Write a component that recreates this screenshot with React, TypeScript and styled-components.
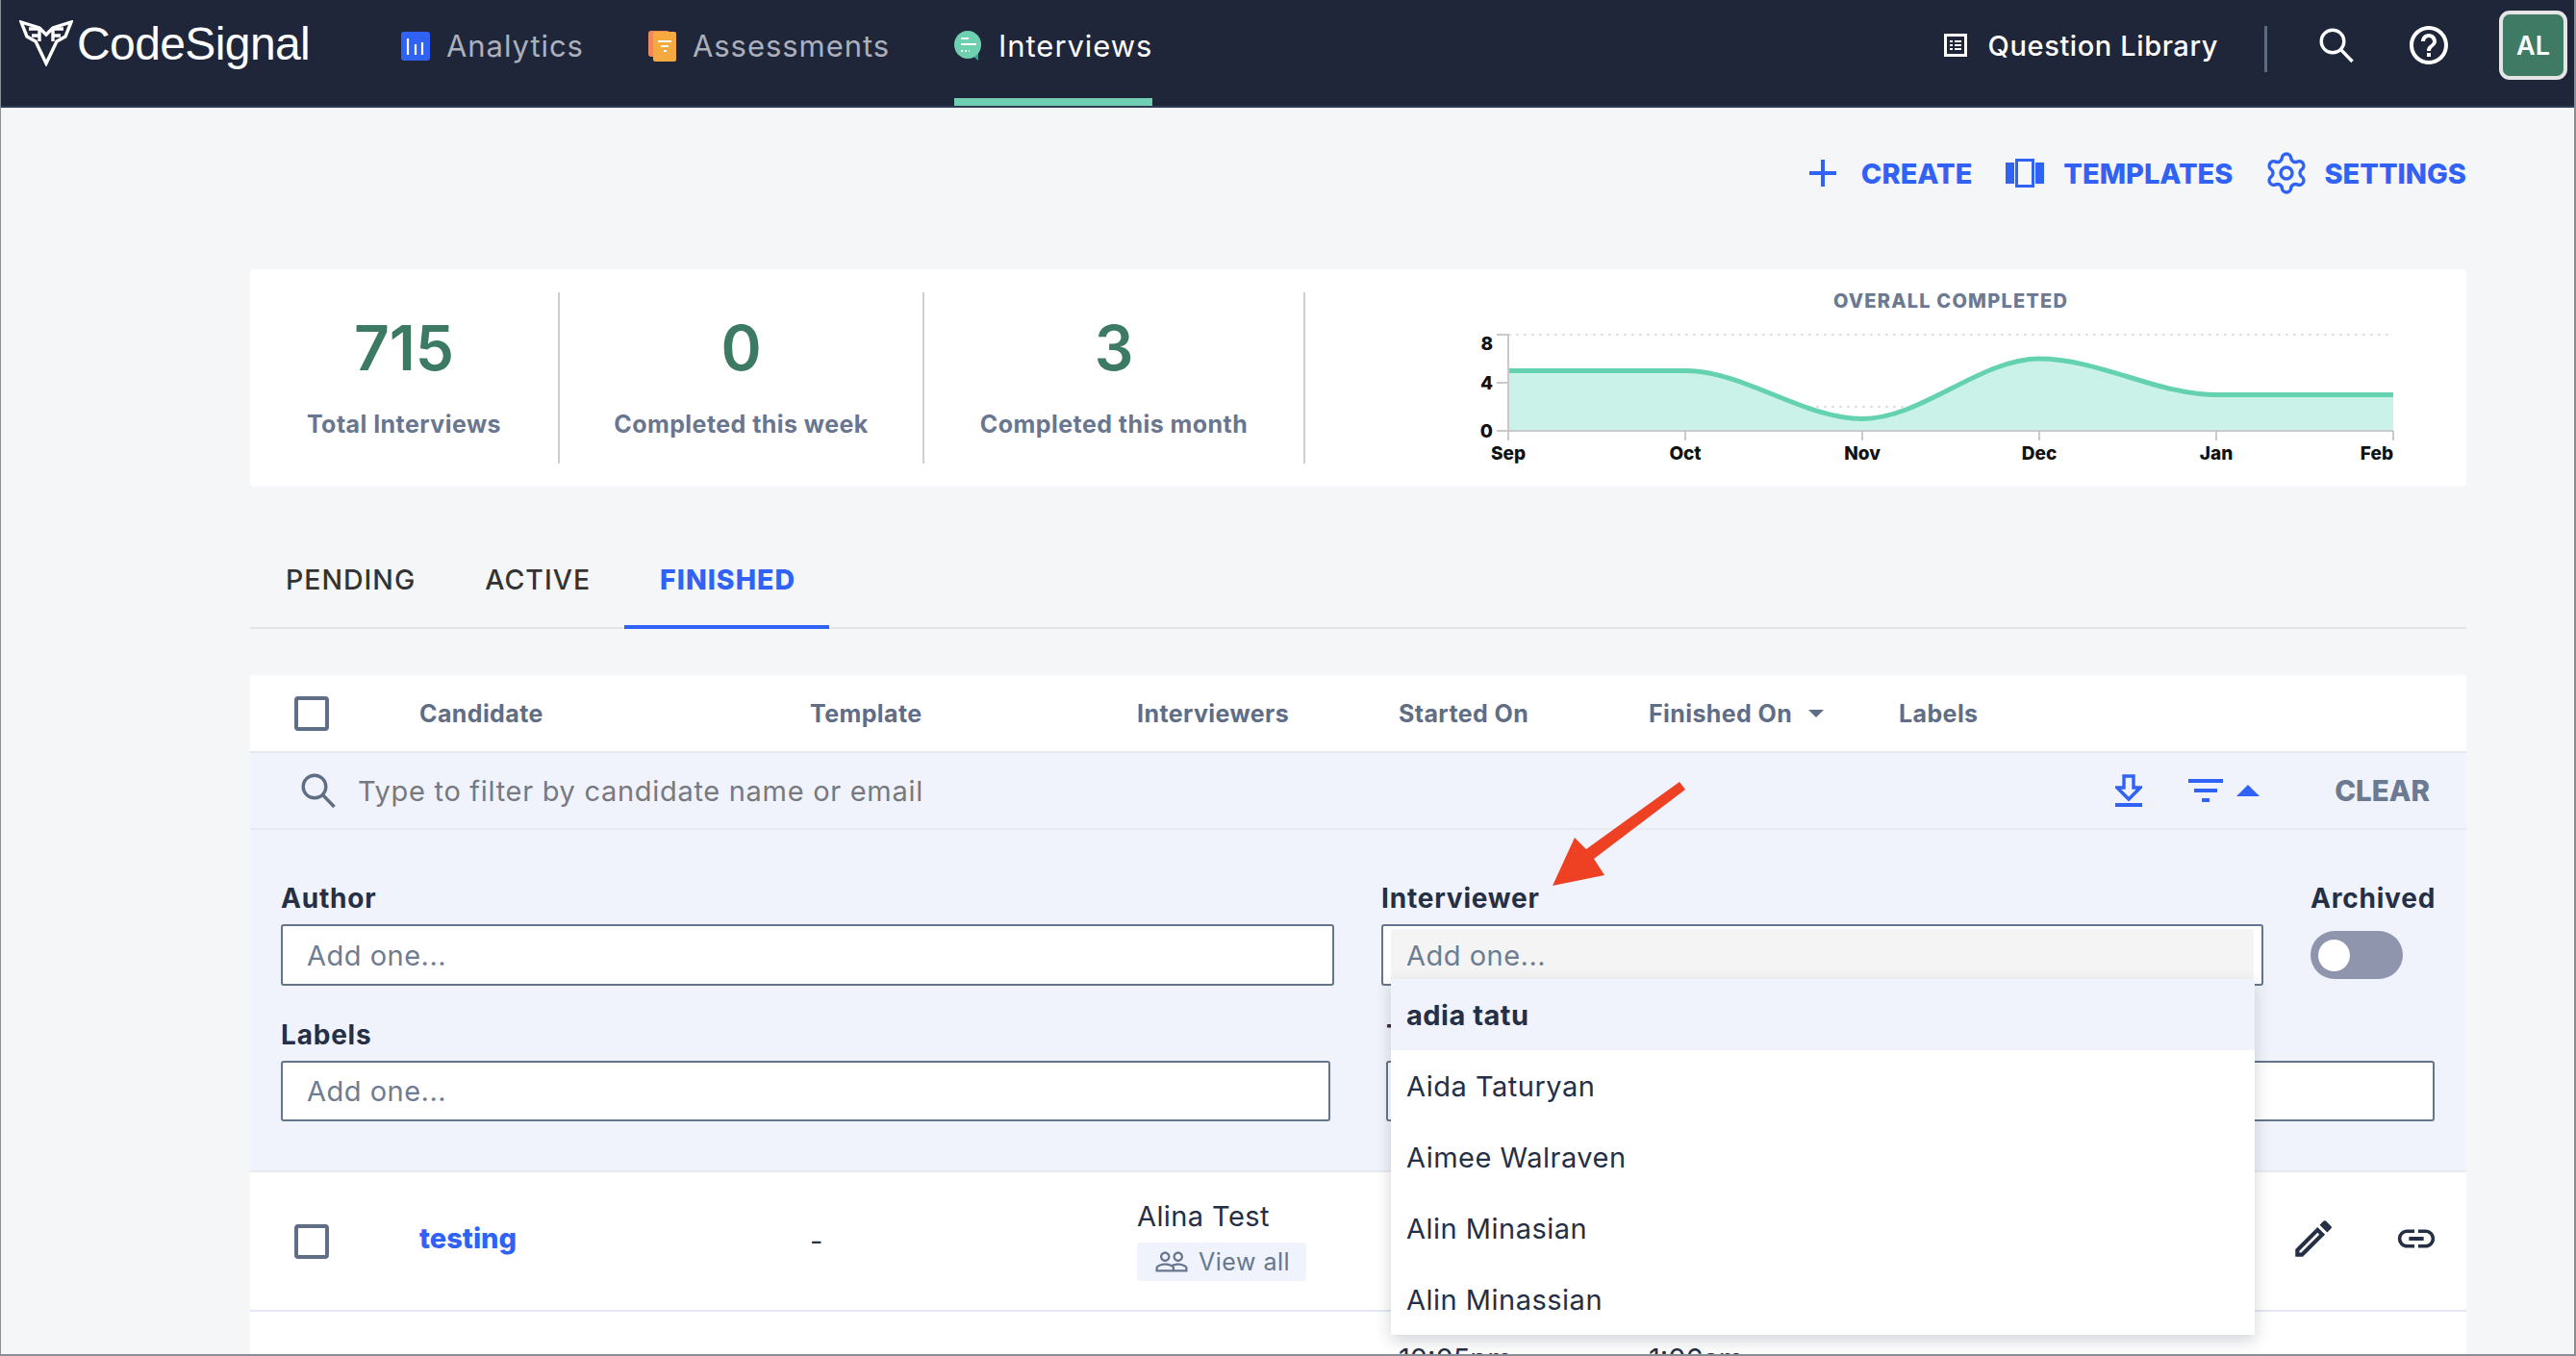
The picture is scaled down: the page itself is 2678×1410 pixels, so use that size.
import React from "react";
import styled, { createGlobalStyle } from "styled-components";
import { Plus, Settings } from "lucide-react";
import { MdHelpOutline, MdOutlineEdit, MdLink, MdPeopleOutline } from "react-icons/md";

const GlobalStyle = createGlobalStyle`
  html, body {
    margin: 0;
    padding: 0;
    background: #f5f6f8;
    font-family: Inter, "Noto Sans", sans-serif;
  }
  * { box-sizing: border-box; }
`;

const BLUE = "#2f62f5";
const NAVY = "#252f45";
const SLATE = "#68768f";

const Page = styled.div`
  position: relative;
  width: 2678px;
  height: 1410px;
  overflow: hidden;
  background: #f5f6f8;
  border-left: 1px solid #8a8d94;
  border-right: 2px solid #8a8d94;
  border-bottom: 2px solid #8a8d94;
`;

const Header = styled.header`
  display: flex;
  align-items: center;
  height: 112px;
  background: #1f263a;
  border-bottom: 2px solid #2c3a55;
`;

const Logo = styled.div`
  display: flex;
  align-items: center;
  gap: 4px;
  width: 416px;
  padding: 0 0 20px 19px;
  color: #fff;
  font-family: "Liberation Sans", Arial, sans-serif;
  font-size: 48px;
  letter-spacing: -0.6px;
`;

const NavItem = styled.div<{ $active?: boolean }>`
  position: relative;
  display: flex;
  align-items: center;
  gap: 17px;
  height: 110px;
  margin-right: 67px;
  padding-bottom: 15px;
  font-size: 31px;
  letter-spacing: 0.95px;
  color: ${(p) => (p.$active ? "#ffffff" : "#aab0bc")};

  &::after {
    content: "";
    display: ${(p) => (p.$active ? "block" : "none")};
    position: absolute;
    left: 0;
    right: 0;
    bottom: 0;
    height: 8px;
    background: #6fcfb0;
  }
`;

const HeaderRight = styled.div`
  display: flex;
  align-items: center;
  margin-left: auto;
  padding: 0 7px 16px 0;
  color: #fff;
`;

const LibraryLink = styled.div`
  display: flex;
  align-items: center;
  gap: 22px;
  font-size: 29px;
  font-weight: 500;
  letter-spacing: 0.6px;
`;

const HeaderDivider = styled.div`
  width: 3px;
  height: 48px;
  margin: 8px 54px 0 48px;
  background: #5d6b80;
`;

const HeaderIcons = styled.div`
  display: flex;
  align-items: center;
  gap: 54px;
`;

const Avatar = styled.div`
  display: flex;
  align-items: center;
  justify-content: center;
  width: 71px;
  height: 72px;
  margin-left: 49px;
  border: 4px solid #e5e5e5;
  border-radius: 11px;
  background: #3e7a64;
  font-size: 27px;
  font-weight: 600;
`;

const Main = styled.main`
  padding: 0 112px 0 259px;
`;

const ActionBar = styled.div`
  display: flex;
  justify-content: flex-end;
  align-items: center;
  gap: 32px;
  height: 168px;
  padding-bottom: 32px;
`;

const ActionLink = styled.div<{ $gap: number }>`
  display: flex;
  align-items: center;
  gap: ${(p) => p.$gap}px;
  color: ${BLUE};
  font-size: 29px;
  font-weight: 800;

  &:first-child {
    margin-right: 3px;
  }
`;

const StatCard = styled.section`
  display: flex;
  height: 226px;
  padding: 24px 0;
  background: #fff;
  border-radius: 4px;
`;

const StatCell = styled.div<{ $width: number }>`
  display: flex;
  flex-direction: column;
  align-items: center;
  flex: 0 0 ${(p) => p.$width}px;
  height: 178px;
  padding-top: 20px;
  border-right: 2px solid #cfcfd2;
`;

const StatNumber = styled.div`
  font-size: 64px;
  line-height: 76px;
  font-weight: 600;
  color: #3c7a64;
`;

const StatLabel = styled.div`
  margin-top: 26px;
  font-size: 25px;
  letter-spacing: 0.44px;
  line-height: 30px;
  font-weight: 700;
  color: ${SLATE};
`;

const ChartBox = styled.div`
  flex: 1;
  height: 178px;
  margin-top: -24px;
`;

const ChartSvg = styled.svg`
  display: block;
`;

const TabBar = styled.nav`
  display: flex;
  height: 148px;
  padding-top: 64px;
  border-bottom: 2px solid #e3e4e6;
`;

const Tab = styled.div<{ $active?: boolean }>`
  height: 84px;
  padding: 17px 35px 0 37px;
  font-size: 28.5px;
  letter-spacing: 1px;
  line-height: 32px;
  font-weight: ${(p) => (p.$active ? 800 : 500)};
  color: ${(p) => (p.$active ? BLUE : "#333333")};
  border-bottom: ${(p) => (p.$active ? `4px solid ${BLUE}` : "none")};
`;

const Table = styled.section`
  margin-top: 48px;
`;

const COLUMNS = "130px 406px 340px 272px 260px 260px 1fr";

const HeadRow = styled.div`
  display: grid;
  grid-template-columns: ${COLUMNS};
  align-items: center;
  height: 81px;
  padding-left: 46px;
  background: #fff;
  border-bottom: 2px solid #e6e9ee;
`;

const HeadCell = styled.div`
  display: flex;
  align-items: center;
  gap: 17px;
  font-size: 25px;
  letter-spacing: 0.4px;
  font-weight: 700;
  color: #5f6d85;
`;

const Checkbox = styled.div`
  width: 36px;
  height: 36px;
  border: 4px solid #5f6d85;
  border-radius: 4px;
  background: #fff;
`;

const FilterBar = styled.div`
  display: flex;
  align-items: center;
  height: 80px;
  padding: 0 38px 0 53px;
  background: #f0f3fb;
  border-bottom: 2px solid #e8eaf0;
`;

const FilterInput = styled.div`
  margin-left: 23px;
  font-size: 29px;
  color: #77797f;
  letter-spacing: 0.7px;
`;

const FilterTools = styled.div`
  display: flex;
  align-items: center;
  margin-left: auto;
`;

const ToolButton = styled.div<{ $left: number }>`
  display: flex;
  margin-left: ${(p) => p.$left}px;
`;

const ClearButton = styled.div`
  margin-left: 78px;
  font-size: 29.5px;
  font-weight: 800;
  color: #6b7a90;
`;

const FilterForm = styled.div`
  display: flex;
  flex-direction: column;
  gap: 35px;
  height: 356px;
  padding: 55px 32px 0;
  background: #f0f3fb;
  border-bottom: 2px solid #e8eaf0;
`;

const FormRow = styled.div<{ $columns: string; $gap: number }>`
  display: grid;
  grid-template-columns: ${(p) => p.$columns};
  column-gap: ${(p) => p.$gap}px;
`;

const Field = styled.div`
  position: relative;
  display: flex;
  flex-direction: column;
  gap: 11px;
`;

const FieldLabel = styled.div`
  font-size: 28px;
  letter-spacing: 0.8px;
  line-height: 32px;
  font-weight: 700;
  white-space: nowrap;
  color: ${NAVY};
`;

const TextBox = styled.div<{ $height?: number }>`
  display: flex;
  align-items: center;
  height: ${(p) => p.$height || 63}px;
  padding-left: 25px;
  background: #fff;
  border: 2px solid #64748c;
  border-radius: 3px;
  font-size: 29px;
  color: #6e7c92;
  letter-spacing: 0.5px;
`;

const ActiveBox = styled(TextBox)`
  padding: 3px 8px;
`;

const ActiveBoxInner = styled.div`
  display: flex;
  align-items: center;
  width: 100%;
  height: 100%;
  padding-left: 16px;
  background: #f4f4f4;
  border-radius: 3px;
`;

const Toggle = styled.div`
  display: flex;
  align-items: center;
  width: 96px;
  height: 50px;
  margin-top: 7px;
  padding-left: 8px;
  background: #8f95ad;
  border-radius: 25px;

  &::before {
    content: "";
    width: 33px;
    height: 33px;
    border-radius: 50%;
    background: #fff;
  }
`;

const Dropdown = styled.ul`
  position: absolute;
  z-index: 2;
  top: 100px;
  left: 10px;
  width: 898px;
  margin: 0;
  padding: 0;
  list-style: none;
  background: #fff;
  box-shadow: 0 6px 16px rgba(30, 40, 60, 0.2);
`;

const DropdownItem = styled.li<{ $active?: boolean }>`
  display: flex;
  align-items: center;
  height: 74px;
  padding-left: 16px;
  font-size: 29px;
  letter-spacing: 0.5px;
  font-weight: ${(p) => (p.$active ? 700 : 400)};
  color: ${NAVY};
  background: ${(p) => (p.$active ? "#f0f3fb" : "#fff")};
`;

const Row = styled.div<{ $height: number; $align?: string }>`
  display: grid;
  grid-template-columns: ${COLUMNS};
  align-items: ${(p) => p.$align || "center"};
  height: ${(p) => p.$height}px;
  padding-left: 46px;
  background: #fff;
  border-bottom: 2px solid #e2e6f5;
  font-size: 29px;
  color: ${NAVY};
`;

const CandidateLink = styled.div`
  padding-bottom: 6px;
  font-size: 29px;
  font-weight: 800;
  color: ${BLUE};
`;

const InterviewerCell = styled.div`
  display: flex;
  flex-direction: column;
  align-items: flex-start;
  gap: 10px;
  padding-bottom: 2px;
  letter-spacing: 0.4px;
`;

const ViewAll = styled.div`
  display: flex;
  align-items: center;
  gap: 10px;
  height: 40px;
  padding: 0 17px 0 18px;
  background: #f0f3fb;
  border-radius: 3px;
  font-size: 25px;
  letter-spacing: 0.5px;
  color: ${SLATE};
`;

const RowActions = styled.div`
  display: flex;
  align-items: center;
  justify-content: flex-end;
  gap: 59px;
  padding: 0 29px 6px 0;
`;

const TimeText = styled.div`
  margin-top: 34px;
  font-size: 29px;
  line-height: 30px;
`;

const Annotation = styled.svg`
  position: absolute;
  z-index: 3;
  left: 1599px;
  top: 800px;
`;

const Triangle = styled.div<{ $up?: boolean; $size: number; $color: string }>`
  width: 0;
  height: 0;
  border-left: ${(p) => p.$size}px solid transparent;
  border-right: ${(p) => p.$size}px solid transparent;
  border-${(p) => (p.$up ? "bottom" : "top")}: ${(p) => p.$size}px solid ${(p) => p.$color};
`;

const LogoMark = () => (
  <svg width="56" height="48" viewBox="0 0 56 48" fill="none" stroke="#fff" strokeWidth="3.4" strokeLinejoin="miter">
    <path d="M2 2 L21 8 L28 15 L35 8 L54 2 L48 17 L39 22 L28 45 L17 22 L8 17 Z" />
    <path d="M10 9 H21 M13 16 H21 M35 9 H46 M35 16 H43 M21 8 V22 M35 8 V22" />
  </svg>
);

const AnalyticsIcon = () => (
  <svg width="30" height="30" viewBox="0 0 30 30">
    <rect width="30" height="30" rx="3" fill={BLUE} />
    <path d="M7 7 V24 M15 13 V24 M22 11 V24" stroke="#fff" strokeWidth="2.2" />
  </svg>
);

const AssessmentsIcon = () => (
  <svg width="29" height="32" viewBox="0 0 29 32">
    <rect width="22" height="27" rx="3" fill="#f0875a" />
    <rect x="5" y="1" width="24" height="31" rx="2" fill="#f5a93e" />
    <path d="M10 11 H24 M13 16 H21 M16 21 H19" stroke="#fff" strokeWidth="2" />
  </svg>
);

const InterviewsIcon = () => (
  <svg width="29" height="31" viewBox="0 0 29 31">
    <path d="M19 26 L25 31 L25 24 Z" fill="#3d9c8c" />
    <ellipse cx="14" cy="14.5" rx="14" ry="14.5" fill="#6fd0b0" />
    <path d="M7 8 H15 M7 14 H23" stroke="#fff" strokeWidth="2" />
    <path d="M7 21 H16" stroke="#fff" strokeWidth="2" strokeDasharray="2 2" />
  </svg>
);

const LibraryIcon = () => (
  <svg width="24" height="24" viewBox="0 0 24 24" fill="none" stroke="#fff">
    <rect x="1.5" y="1.5" width="21" height="21" strokeWidth="3" />
    <path d="M6 8 H9 M11 8 H18 M6 12 H9 M11 12 H18 M6 16 H9 M11 16 H18" strokeWidth="2" />
  </svg>
);

const SearchIcon = ({ color }: { color: string }) => (
  <svg width="36" height="36" viewBox="0 0 36 36" fill="none" stroke={color} strokeWidth="3.4">
    <circle cx="14" cy="14" r="11.8" />
    <path d="M22.5 22.5 L34.5 35" />
  </svg>
);

const TemplatesIcon = () => (
  <svg width="40" height="30" viewBox="0 0 40 30" fill={BLUE}>
    <rect y="4" width="9" height="22" />
    <rect x="31" y="4" width="9" height="22" />
    <rect x="11.5" y="1.5" width="17" height="27" fill="none" stroke={BLUE} strokeWidth="3" />
  </svg>
);

const DownloadIcon = () => (
  <svg width="28" height="34" viewBox="0 0 28 34">
    <path d="M9 2 H19 V14 H26 L14 26 L2 14 H9 Z" fill="none" stroke={BLUE} strokeWidth="3.4" />
    <rect y="30" width="28" height="4" fill={BLUE} />
  </svg>
);

const FilterIcon = () => (
  <svg width="36" height="24" viewBox="0 0 36 24" fill={BLUE}>
    <rect y="0" width="36" height="4" />
    <rect x="6" y="10" width="24" height="4" />
    <rect x="14" y="20" width="8" height="4" />
  </svg>
);

const points: [number, number][] = [
  [0, 5],
  [184, 5],
  [368, 1],
  [552, 6],
  [736, 3],
  [920, 3],
];

// monotone curve: every point here is flat or a local extreme, so tangents are horizontal
const buildCurve = () => {
  const y = (v: number) => 100 - v * 12.5;
  let d = `M${points[0][0]},${y(points[0][1])}`;
  for (let i = 1; i < points.length; i++) {
    const [x0, v0] = points[i - 1];
    const [x1, v1] = points[i];
    const dx = (x1 - x0) / 3;
    d += ` C${x0 + dx},${y(v0)} ${x1 - dx},${y(v1)} ${x1},${y(v1)}`;
  }
  return d;
};

const AreaChart = () => {
  const curve = buildCurve();
  const labels = ["Sep", "Oct", "Nov", "Dec", "Jan", "Feb"];
  return (
    <ChartSvg width="1206" height="226" viewBox="-211 -68 1206 226">
      <text x="460" y="-28" textAnchor="middle" fontSize="20" fontWeight="800" letterSpacing="1.2" fill="#6b7a92" fontFamily="Inter">
        OVERALL COMPLETED
      </text>
      <path d="M0 0 H920" stroke="#dfe1e4" strokeWidth="2" strokeDasharray="3 5" />
      <path d="M0 75 H920" stroke="#dfe1e4" strokeWidth="2" strokeDasharray="3 5" />
      <path d={`${curve} L920,100 L0,100 Z`} fill="#caf2e8" />
      <path d={curve} fill="none" stroke="#64d2ae" strokeWidth="5" />
      <path d="M-12 0 H0 V100 H920 M-12 50 H0 M-12 100 H0" fill="none" stroke="#c9c9c9" strokeWidth="2" />
      {labels.map((_, i) => (
        <path key={i} d={`M${i * 184} 100 V110`} stroke="#c9c9c9" strokeWidth="2" />
      ))}
      {[
        ["8", 16],
        ["4", 57],
        ["0", 107],
      ].map(([t, y]) => (
        <text key={t} x="-16" y={y} textAnchor="end" fontSize="19" fontWeight="800" fill="#111" fontFamily="Inter">
          {t}
        </text>
      ))}
      {labels.map((t, i) => (
        <text
          key={t}
          x={i === 5 ? 920 : i * 184}
          y="130"
          textAnchor={i === 5 ? "end" : "middle"}
          fontSize="19"
          fontWeight="800"
          fill="#111"
          fontFamily="Inter"
        >
          {t}
        </text>
      ))}
    </ChartSvg>
  );
};

export default function App() {
  return (
    <>
      <GlobalStyle />
      <Page>
        <Header>
          <Logo>
            <LogoMark />
            CodeSignal
          </Logo>
          <NavItem>
            <AnalyticsIcon />
            Analytics
          </NavItem>
          <NavItem>
            <AssessmentsIcon />
            Assessments
          </NavItem>
          <NavItem $active>
            <InterviewsIcon />
            Interviews
          </NavItem>
          <HeaderRight>
            <LibraryLink>
              <LibraryIcon />
              Question Library
            </LibraryLink>
            <HeaderDivider />
            <HeaderIcons>
              <SearchIcon color="#ffffff" />
              <MdHelpOutline size={48} />
            </HeaderIcons>
            <Avatar>AL</Avatar>
          </HeaderRight>
        </Header>

        <Main>
          <ActionBar>
            <ActionLink $gap={16}>
              <Plus size={48} strokeWidth={2} strokeLinecap="butt" />
              CREATE
            </ActionLink>
            <ActionLink $gap={20}>
              <TemplatesIcon />
              TEMPLATES
            </ActionLink>
            <ActionLink $gap={15}>
              <Settings size={48} strokeWidth={1.7} />
              SETTINGS
            </ActionLink>
          </ActionBar>

          <StatCard>
            <StatCell $width={322}>
              <StatNumber>715</StatNumber>
              <StatLabel>Total Interviews</StatLabel>
            </StatCell>
            <StatCell $width={379}>
              <StatNumber>0</StatNumber>
              <StatLabel>Completed this week</StatLabel>
            </StatCell>
            <StatCell $width={396}>
              <StatNumber>3</StatNumber>
              <StatLabel>Completed this month</StatLabel>
            </StatCell>
            <ChartBox>
              <AreaChart />
            </ChartBox>
          </StatCard>

          <TabBar>
            <Tab>PENDING</Tab>
            <Tab>ACTIVE</Tab>
            <Tab $active>FINISHED</Tab>
          </TabBar>

          <Table>
            <HeadRow>
              <Checkbox />
              <HeadCell>Candidate</HeadCell>
              <HeadCell>Template</HeadCell>
              <HeadCell>Interviewers</HeadCell>
              <HeadCell>Started On</HeadCell>
              <HeadCell>
                Finished On
                <Triangle $size={8} $color="#5f6d85" />
              </HeadCell>
              <HeadCell>Labels</HeadCell>
            </HeadRow>

            <FilterBar>
              <SearchIcon color="#5f6d85" />
              <FilterInput>Type to filter by candidate name or email</FilterInput>
              <FilterTools>
                <DownloadIcon />
                <ToolButton $left={48}>
                  <FilterIcon />
                </ToolButton>
                <ToolButton $left={14}>
                  <Triangle $up $size={12} $color={BLUE} />
                </ToolButton>
                <ClearButton>CLEAR</ClearButton>
              </FilterTools>
            </FilterBar>

            <FilterForm>
              <FormRow $columns="1095px 917px 130px" $gap={49}>
                <Field>
                  <FieldLabel>Author</FieldLabel>
                  <TextBox $height={64}>Add one...</TextBox>
                </Field>
                <Field>
                  <FieldLabel>Interviewer</FieldLabel>
                  <ActiveBox $height={64}>
                    <ActiveBoxInner>Add one...</ActiveBoxInner>
                  </ActiveBox>
                  <Dropdown>
                    <DropdownItem $active>adia tatu</DropdownItem>
                    <DropdownItem>Aida Taturyan</DropdownItem>
                    <DropdownItem>Aimee Walraven</DropdownItem>
                    <DropdownItem>Alin Minasian</DropdownItem>
                    <DropdownItem>Alin Minassian</DropdownItem>
                  </Dropdown>
                </Field>
                <Field>
                  <FieldLabel>Archived</FieldLabel>
                  <Toggle />
                </Field>
              </FormRow>
              <FormRow $columns="1091px 1090px" $gap={58}>
                <Field>
                  <FieldLabel>Labels</FieldLabel>
                  <TextBox>Add one...</TextBox>
                </Field>
                <Field>
                  <FieldLabel>Template</FieldLabel>
                  <TextBox />
                </Field>
              </FormRow>
            </FilterForm>

            <Row $height={145}>
              <Checkbox />
              <CandidateLink>testing</CandidateLink>
              <div>-</div>
              <InterviewerCell>
                Alina Test
                <ViewAll>
                  <MdPeopleOutline size={36} />
                  View all
                </ViewAll>
              </InterviewerCell>
              <div />
              <div />
              <RowActions>
                <MdOutlineEdit size={50} />
                <MdLink size={46} />
              </RowActions>
            </Row>
            <Row $height={60} $align="start">
              <div />
              <div />
              <div />
              <div />
              <TimeText>10:05pm</TimeText>
              <TimeText>1:06am</TimeText>
            </Row>
          </Table>
        </Main>

        <Annotation width="170" height="130" viewBox="0 0 170 130">
          <polygon points="146,13 152,21 57,93 68,110 14,121 37,71 49,83" fill="#ee4023" />
        </Annotation>
      </Page>
    </>
  );
}
